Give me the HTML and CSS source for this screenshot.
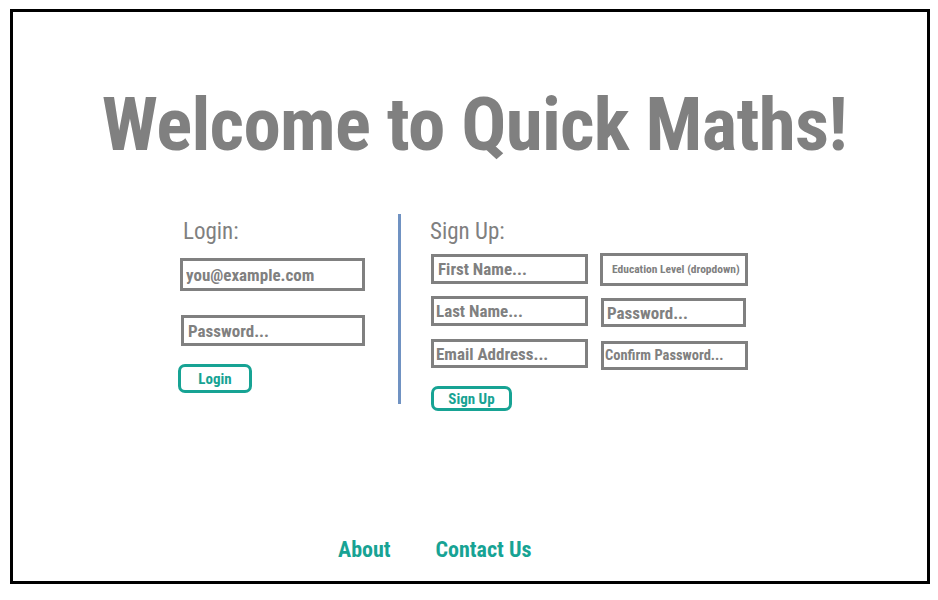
FILE: index.html
```html
<!DOCTYPE html>
<html lang="en">
<head>
<meta charset="utf-8">
<title>Quick Maths</title>
<link rel="stylesheet" href="styles.css">
</head>
<body>
<div class="frame">
  <h1 class="title">Welcome to Quick Maths!</h1>
  <div class="forms">
    <section class="login">
      <h2 class="heading">Login:</h2>
      <input class="field l-email" type="text" placeholder="you@example.com">
      <input class="field l-pass" type="password" placeholder="Password...">
      <button class="btn btn-login" type="button">Login</button>
    </section>
    <div class="divider"></div>
    <section class="signup">
      <h2 class="heading heading-signup">Sign Up:</h2>
      <div class="grid">
        <input class="field s-first" type="text" placeholder="First Name...">
        <div class="field s-edu">Education Level (dropdown)</div>
        <input class="field s-last" type="text" placeholder="Last Name...">
        <input class="field s-pass" type="password" placeholder="Password...">
        <input class="field s-email" type="text" placeholder="Email Address...">
        <input class="field s-confirm" type="password" placeholder="Confirm Password...">
      </div>
      <button class="btn btn-signup" type="button">Sign Up</button>
    </section>
  </div>
  <nav class="footer">
    <a class="link" href="#">About</a>
    <a class="link" href="#">Contact Us</a>
  </nav>
</div>
</body>
</html>
```
FILE: styles.css
```css
html, body {
  margin: 0;
  padding: 0;
  background: #ffffff;
}

body {
  font-family: "Roboto Condensed", "Liberation Sans", sans-serif;
  color: #808080;
}

.frame {
  margin: 9px 0 0 10px;
  width: 920px;
  height: 575px;
  border: 3px solid #000000;
  box-sizing: border-box;
  display: flex;
  flex-direction: column;
}

.title {
  margin: 0;
  padding: 75px 0 0 9px;
  font-size: 75px;
  line-height: 75px;
  font-weight: bold;
  letter-spacing: -0.7px;
  text-align: center;
  color: #808080;
}

.forms {
  margin-top: 52px;
  padding-left: 165px;
  display: flex;
  align-items: flex-start;
}

.login {
  width: 220px;
  padding-top: 6px;
  display: flex;
  flex-direction: column;
  align-items: flex-start;
}

.heading {
  margin: 0 0 0 5px;
  font-size: 23px;
  line-height: 23px;
  font-weight: normal;
  color: #808080;
}

.heading-signup {
  margin-left: -1px;
}

.field {
  display: block;
  box-sizing: border-box;
  border: 3px solid #808080;
  border-radius: 0;
  background: #ffffff;
  margin: 0;
  padding: 0 0 0 3px;
  font-family: inherit;
  font-size: 17px;
  font-weight: bold;
  color: #808080;
  outline: none;
}

.field::placeholder {
  color: #808080;
  opacity: 1;
}

.l-email {
  margin: 15px 0 0 2px;
  width: 185px;
  height: 33px;
}

.l-pass {
  margin: 24px 0 0 3px;
  width: 184px;
  height: 31px;
  padding-left: 4px;
}

.btn {
  box-sizing: border-box;
  border: 3px solid #17a394;
  border-radius: 7px;
  background: #ffffff;
  color: #17a394;
  font-family: inherit;
  font-size: 15px;
  font-weight: bold;
  padding: 0;
  cursor: pointer;
}

.btn-login {
  margin-top: 18px;
  width: 74px;
  height: 29px;
}

.divider {
  width: 3px;
  height: 190px;
  background: #7092c2;
}

.signup {
  margin-left: 30px;
  padding-top: 6px;
  display: flex;
  flex-direction: column;
  align-items: flex-start;
}

.grid {
  margin-top: 10px;
  display: grid;
  grid-template-columns: 157px 148px;
  grid-template-rows: 43px 43px 32px;
  column-gap: 12px;
  align-items: start;
}

.s-first {
  margin-top: 1px;
  height: 30px;
  width: 157px;
  padding-left: 4px;
}

.s-edu {
  height: 33px;
  width: 148px;
  padding-left: 9px;
  font-size: 11.5px;
  line-height: 27px;
  white-space: nowrap;
  overflow: hidden;
}

.s-last {
  height: 30px;
  width: 157px;
  padding-left: 2px;
}

.s-pass {
  margin: 2px 0 0 1px;
  height: 29px;
  width: 145px;
  padding-left: 3px;
}

.s-email {
  height: 29px;
  width: 157px;
  padding-left: 2px;
}

.s-confirm {
  margin: 2px 0 0 1px;
  height: 29px;
  width: 147px;
  padding-left: 1px;
  font-size: 14.5px;
}

.btn-signup {
  margin-top: 15px;
  width: 81px;
  height: 25px;
}

.footer {
  margin-top: auto;
  padding: 0 0 20px 325px;
  display: flex;
  gap: 45px;
}

.link {
  font-size: 22px;
  line-height: 22px;
  font-weight: bold;
  color: #17a394;
  text-decoration: none;
}
```
